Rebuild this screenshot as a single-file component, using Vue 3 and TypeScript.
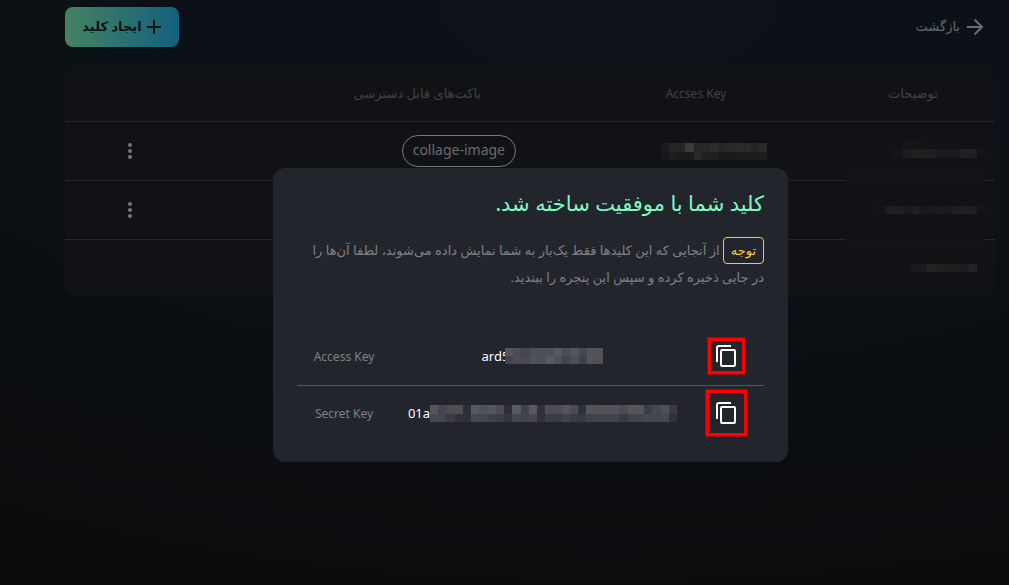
<script setup lang="ts">
import { h, type FunctionalComponent } from 'vue'

interface MosaicProps {
  rows: string[]
  width: number
  height: number
}

/* Pixelated cover for values that must stay private. */
const Mosaic: FunctionalComponent<MosaicProps> = (props) => {
  const grid = props.rows.map((row) => row.split(' '))
  const columns = grid[0].length
  return h(
    'svg',
    {
      width: props.width,
      height: props.height,
      viewBox: `0 0 ${columns} ${grid.length}`,
      preserveAspectRatio: 'none',
      'shape-rendering': 'crispEdges',
      'aria-hidden': 'true',
    },
    grid.flatMap((row, y) =>
      row.map((color, x) => h('rect', { x, y, width: 1, height: 1, fill: `#${color}` })),
    ),
  )
}
Mosaic.props = ['rows', 'width', 'height']

interface Row {
  note: MosaicProps
  key?: MosaicProps
  bucket?: string
  menu: boolean
}

const rows: Row[] = [
  {
    note: {
      width: 91,
      height: 18,
      rows: [
        '111215 151317 171317 131317 121216 121216 121216 121216 121216 121216 111215',
        '141417 1c1c1f 1f1f20 1e1e20 1f1f22 1a1a1d 1b1b1e 1b1b1e 1f1f22 202023 141417',
      ],
    },
    key: {
      width: 106,
      height: 17,
      rows: [
        '1b1b1e 252528 252528 3a3a3b 252528 27272a 2c2c2f 27272a 29292a 2c2a2a 29292c 242427 2a2a2d',
        '18181b 1f1f22 1b1b1e 1b1b1e 28282b 212124 1f1f22 1b1b1e 1b1b1e 1b1b1e 1d1d20 1d1d20 1d1d20',
      ],
    },
    bucket: 'collage-image',
    menu: true,
  },
  {
    note: {
      width: 107,
      height: 8,
      rows: ['151518 1f1f20 1f1f20 1b1b1e 1f1f20 18181b 19191c 1d1d1f 19191c 1e1e1f 1f1f1f 1e1e1f 141417'],
    },
    menu: true,
  },
  {
    note: {
      width: 74,
      height: 8,
      rows: ['1a1a1d 1b1b1d 222223 202021 1e1e1f 1e1e21 1d1d20 222223 121316'],
    },
    menu: false,
  },
]

interface Credential {
  id: string
  label: string
  prefix: string
  cover: MosaicProps
}

const credentials: Credential[] = [
  {
    id: 'access',
    label: 'Access Key',
    prefix: 'ard5',
    cover: {
      width: 98,
      height: 16,
      rows: [
        '57555b 4d4c51 45464f 4d4e57 4c4f59 504f52 59595c 4c4b50 54545e 45484f 50535a 555251',
        '43464f 4c4c52 494c52 4f535a 4a4e56 555962 505156 42454e 4c5056 3d414a 50545d 504f53',
      ],
    },
  },
  {
    id: 'secret',
    label: 'Secret Key',
    prefix: '01a',
    cover: {
      width: 247,
      height: 17,
      rows: [
        '57555b 454650 4d4d54 504c51 2b2d35 595963 515259 56575b 4d4a50 2b2d37 585a66 434347 575865 333137 4b4c58 514c54 57545f 4d4a50 2b303c 545459 535358 535359 525359 4d4c51 57575b 555559 3c3c44 454852 4d4f59 3d3941',
        '464850 45464d 3c3b40 333136 2d3037 434851 42464d 3e4247 403e44 333640 45464a 434448 45454a 333137 3c3e47 3b3a3e 424248 383b44 353944 414146 43434a 43434a 414249 3b393e 43434a 43444a 454650 434650 454852 353138',
      ],
    },
  },
]
</script>

<template>
  <div class="page" dir="rtl">
    <header class="topbar">
      <a class="back" href="#">
        <svg width="18" height="18" viewBox="0 0 18 18" aria-hidden="true">
          <path d="M1 9h15M8.500 1.500L16 9l-7.500 7.500" fill="none" stroke="currentColor" stroke-width="2" />
        </svg>
        <span>بازگشت</span>
      </a>
      <button class="create" type="button">
        <svg width="16" height="16" viewBox="0 0 16 16" aria-hidden="true">
          <path d="M8 1v14M1 8h14" fill="none" stroke="currentColor" stroke-width="2" />
        </svg>
        <span>ایجاد کلید</span>
      </button>
    </header>

    <main class="card">
      <table class="keys">
        <colgroup>
          <col class="col-note" />
          <col class="col-key" />
          <col />
          <col class="col-menu" />
        </colgroup>
        <thead>
          <tr>
            <th scope="col">توضیحات</th>
            <th scope="col" class="latin" dir="ltr">Accses Key</th>
            <th scope="col" class="bucket-head">باکت‌های قابل دسترسی</th>
            <td></td>
          </tr>
        </thead>
        <tbody>
          <tr v-for="(row, i) in rows" :key="i">
            <td class="note"><Mosaic v-bind="row.note" /></td>
            <td class="key"><Mosaic v-if="row.key" v-bind="row.key" /></td>
            <td class="bucket">
              <span v-if="row.bucket" class="chip" dir="ltr">{{ row.bucket }}</span>
            </td>
            <td>
              <button v-if="row.menu" class="more" type="button" aria-label="گزینه‌ها">
                <svg width="4" height="16" viewBox="0 0 4 16" fill="currentColor" aria-hidden="true">
                  <circle cx="2" cy="2" r="2" />
                  <circle cx="2" cy="8" r="2" />
                  <circle cx="2" cy="14" r="2" />
                </svg>
              </button>
            </td>
          </tr>
        </tbody>
      </table>
    </main>

    <div class="overlay">
      <section class="dialog" role="dialog" aria-modal="true" aria-labelledby="dialog-title">
        <h2 id="dialog-title">کلید شما با موفقیت ساخته شد.</h2>
        <p class="notice">
          <strong class="badge">توجه</strong>
          از آنجایی که این کلیدها فقط یک‌بار به شما نمایش داده می‌شوند، لطفا آن‌ها را
          <br />در جایی ذخیره کرده و سپس این پنجره را ببندید.
        </p>
        <table class="credentials" dir="ltr">
          <tbody>
            <tr v-for="item in credentials" :key="item.id">
              <th scope="row">{{ item.label }}</th>
              <td class="value">
                <span class="masked" :class="item.id">
                  <span>{{ item.prefix }}</span>
                  <Mosaic v-bind="item.cover" />
                </span>
              </td>
              <td class="action">
                <button class="copy" :class="item.id" type="button" :aria-label="`Copy ${item.label}`">
                  <svg width="20" height="22" viewBox="0 0 20 22" fill="none" stroke="currentColor" stroke-width="2" aria-hidden="true">
                    <path d="M15 1H3Q1 1 1 3V17" />
                    <rect x="5" y="5" width="14" height="16" rx="1" />
                  </svg>
                </button>
              </td>
            </tr>
          </tbody>
        </table>
      </section>
    </div>
  </div>
</template>

<style>
body {
  margin: 0;
  background: #0b0c0e;
}
</style>

<style scoped>
.page {
  box-sizing: border-box;
  min-height: 100vh;
  padding: 7px 14px 24px 65px;
  font-family: "Noto Sans", "DejaVu Sans", sans-serif;
  font-size: 13px;
  color: #414244;
  background: radial-gradient(ellipse 120% 100% at 60% 0, #0d111a 0, #0b1115 50%, #0b0c0e 100%);
}

button {
  padding: 0;
  border: 0;
  background: none;
  font: inherit;
  color: inherit;
}

svg {
  display: block;
  flex: none;
}

.topbar {
  display: flex;
  align-items: center;
  justify-content: space-between;
  height: 40px;
  padding-right: 11px;
}

.back {
  display: flex;
  align-items: center;
  gap: 6px;
  color: #6b6c6e;
  text-decoration: none;
}

.back span,
.create span {
  padding-bottom: 2px;
}

.create {
  display: flex;
  align-items: center;
  justify-content: center;
  gap: 4px;
  min-width: 114px;
  height: 40px;
  border-radius: 8px;
  background: linear-gradient(90deg, #458263, #13607f);
  font-weight: 700;
  color: #0c1214;
}

.card {
  margin-top: 21px;
  border-radius: 12px;
  background: #111215;
}

.keys {
  width: 100%;
  border-collapse: separate;
  border-spacing: 0;
  table-layout: fixed;
}

.col-note {
  width: 164px;
}

.col-key {
  width: 270px;
}

.col-menu {
  width: 130px;
}

.keys th,
.keys td {
  height: 58px;
  padding: 0;
  border-bottom: 1px solid #27282a;
  text-align: center;
  font-weight: 400;
}

.keys thead th,
.keys thead td {
  height: 50px;
  padding-bottom: 3px;
}

.keys .latin {
  font-size: 12px;
}

.keys tbody tr:last-child td {
  height: 56px;
  border-bottom: 0;
}

.keys td svg {
  margin: 0 auto;
}

.keys .note {
  position: relative;
  padding-right: 10px;
}

.keys .note svg {
  margin: 0;
}

.keys tr:first-child .note {
  height: 54px;
  padding-bottom: 4px;
}

.keys .key {
  padding-left: 36px;
}

.note::after {
  content: "";
  position: absolute;
  right: 10px;
  bottom: -1px;
  width: 140px;
  height: 8px;
  background: #131316;
}

tr:nth-child(2) .note::after {
  bottom: -8px;
}

tr:last-child .note::after {
  display: none;
}

.keys .bucket-head {
  padding-right: 80px;
  text-align: right;
}

.keys .bucket {
  padding-right: 45px;
  text-align: right;
}

.chip {
  display: inline-block;
  box-sizing: border-box;
  height: 32px;
  padding: 0 10px;
  border: 1px solid #77787a;
  border-radius: 16px;
  font-size: 14px;
  line-height: 28px;
  color: #6b6c6e;
  vertical-align: middle;
}

.more {
  width: 24px;
  height: 24px;
  color: #77787a;
  vertical-align: middle;
}

.overlay {
  position: fixed;
  inset: 0;
  display: flex;
  align-items: center;
  justify-content: center;
  padding: 45px 0 0 52px;
}

.dialog {
  box-sizing: border-box;
  width: 515px;
  max-width: 100%;
  padding: 20px 24px;
  border-radius: 12px;
  background: #23252c;
}

h2 {
  margin: 0;
  font-size: 21px;
  font-weight: 400;
  line-height: 30px;
  color: #7ffbc0;
}

.notice {
  margin: 19px 0 39px;
  line-height: 26px;
  color: #7f8083;
}

.badge {
  display: inline-block;
  box-sizing: border-box;
  min-width: 41px;
  border: 1px solid #ffc53d;
  border-radius: 4px;
  font-weight: 400;
  line-height: 25px;
  text-align: center;
  color: #ffc53d;
}

.credentials {
  width: 100%;
  border-collapse: separate;
  border-spacing: 0;
  table-layout: fixed;
}

.credentials th,
.credentials td {
  height: 54px;
  padding: 0 0 2px;
  text-align: center;
  font-size: 12px;
  font-weight: 400;
  color: #7f8083;
}

.credentials tr:first-child > * {
  border-bottom: 1px solid #55575a;
}

.credentials th {
  width: 94px;
}

.credentials .value {
  padding-left: 4px;
}

.credentials .action {
  width: 72px;
  padding-right: 2px;
}

.masked {
  display: flex;
  align-items: center;
  justify-content: center;
  font-size: 13px;
  color: #ffffff;
}

.masked.access svg {
  margin-left: -4px;
}

.copy {
  display: inline-flex;
  align-items: center;
  justify-content: center;
  box-sizing: border-box;
  border: 3px solid #ff0000;
  outline: 1px solid #8e1016;
  color: #ffffff;
  vertical-align: middle;
}

.copy.access {
  width: 37px;
  height: 36px;
}

.copy.secret {
  width: 41px;
  height: 46px;
}
</style>
